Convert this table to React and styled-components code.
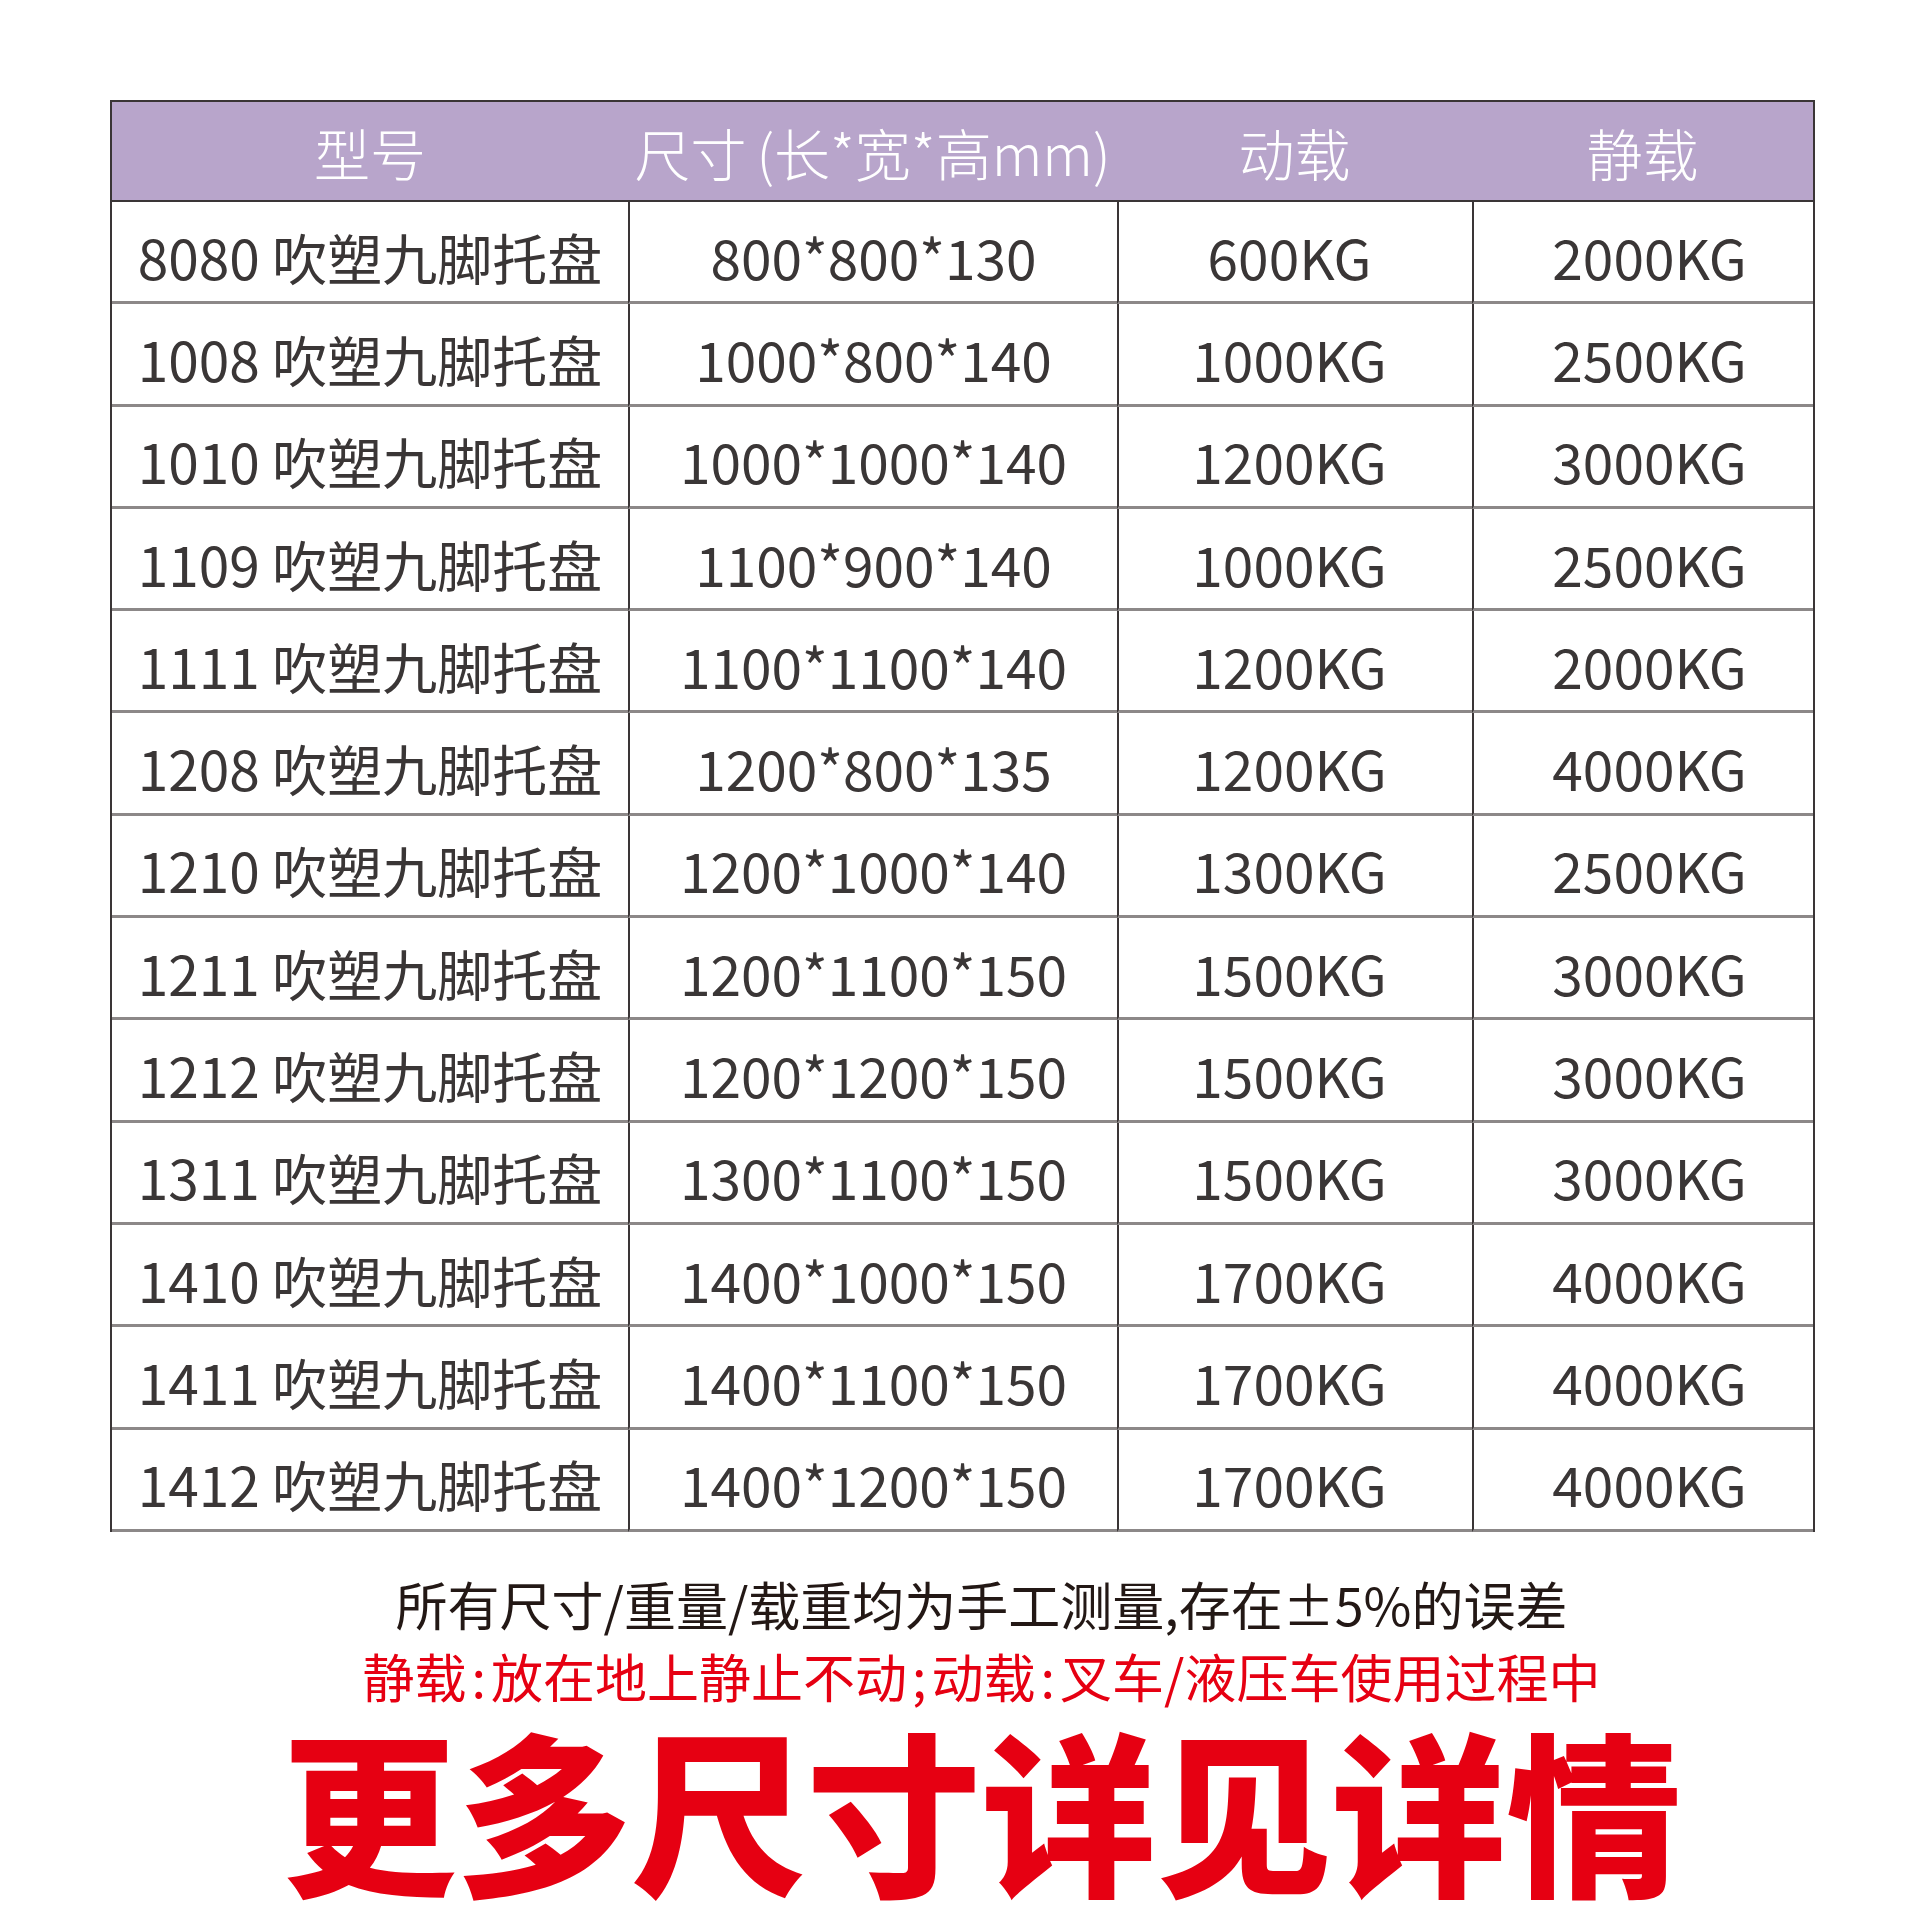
import React from 'react';
import styled, { createGlobalStyle } from 'styled-components';

const GlobalStyle = createGlobalStyle`
  html, body {
    margin: 0;
    padding: 0;
    background: #ffffff;
  }
  body {
    font-family: "Noto Sans CJK SC", "Noto Sans", sans-serif;
  }
`;

const Page = styled.main`
  width: 1919px;
  height: 1919px;
  padding-top: 100px;
  box-sizing: border-box;
  display: flex;
  flex-direction: column;
  overflow: hidden;
`;

const Table = styled.section`
  margin-left: 110px;
  width: 1705px;
  display: grid;
  grid-template-columns: 516px 489px 355px 341px;
  border-left: 2px solid #3a3536;
  border-right: 2px solid #3a3536;
  box-sizing: border-box;
`;

const HeadCell = styled.div`
  height: 102px;
  box-sizing: border-box;
  background: #b8a5cb;
  border-top: 2px solid #3a3536;
  border-bottom: 2px solid #3a3536;
  display: flex;
  align-items: center;
  justify-content: center;
  color: #ffffff;
  font-size: 56px;
  font-weight: 300;
  padding-top: 1px;
  white-space: nowrap;
`;

const Paren = styled.span`
  margin-left: 10px;
`;

const Cell = styled.div`
  height: 102.3px;
  box-sizing: border-box;
  border-bottom: 3px solid #8c8888;
  border-left: ${p => (p.$first ? 'none' : '2px solid #3a3536')};
  display: flex;
  align-items: center;
  justify-content: center;
  color: #3a3636;
  font-size: 55px;
  padding-top: 8px;
  padding-left: ${p => (p.$shift > 0 ? p.$shift : 0)}px;
  padding-right: ${p => (p.$shift < 0 ? -p.$shift : 0)}px;
  white-space: nowrap;
`;

const Notes = styled.footer`
  display: flex;
  flex-direction: column;
  align-items: center;
  padding-left: 44px;
  margin-top: 36px;
`;

const Note = styled.p`
  margin: 0;
  font-size: 52px;
  line-height: 1.38;
  color: ${p => p.$color};
  white-space: nowrap;
`;

const Punct = styled.span`
  padding: 0 5px;
`;

const Banner = styled.h2`
  margin: 0;
  font-size: 175px;
  font-weight: 900;
  line-height: 1.1;
  color: #e60012;
  white-space: nowrap;
`;

const rows = [
  ['8080', '800*800*130', '600KG', '2000KG'],
  ['1008', '1000*800*140', '1000KG', '2500KG'],
  ['1010', '1000*1000*140', '1200KG', '3000KG'],
  ['1109', '1100*900*140', '1000KG', '2500KG'],
  ['1111', '1100*1100*140', '1200KG', '2000KG'],
  ['1208', '1200*800*135', '1200KG', '4000KG'],
  ['1210', '1200*1000*140', '1300KG', '2500KG'],
  ['1211', '1200*1100*150', '1500KG', '3000KG'],
  ['1212', '1200*1200*150', '1500KG', '3000KG'],
  ['1311', '1300*1100*150', '1500KG', '3000KG'],
  ['1410', '1400*1000*150', '1700KG', '4000KG'],
  ['1411', '1400*1100*150', '1700KG', '4000KG'],
  ['1412', '1400*1200*150', '1700KG', '4000KG'],
];

export default function App() {
  return (
    <>
      <GlobalStyle />
      <Page>
        <Table>
          <HeadCell>型号</HeadCell>
          <HeadCell>尺寸<Paren>(</Paren>长*宽*高mm)</HeadCell>
          <HeadCell>动载</HeadCell>
          <HeadCell>静载</HeadCell>
          {rows.map(([model, size, dyn, stat]) => (
            <React.Fragment key={model}>
              <Cell $first>{model} 吹塑九脚托盘</Cell>
              <Cell>{size}</Cell>
              <Cell $shift={-12}>{dyn}</Cell>
              <Cell $shift={12}>{stat}</Cell>
            </React.Fragment>
          ))}
        </Table>

        <Notes>
          <Note $color="#231815">所有尺寸/重量/载重均为手工测量,存在±5%的误差</Note>
          <Note $color="#e60012">
            静载<Punct>:</Punct>放在地上静止不动<Punct>;</Punct>动载<Punct>:</Punct>叉车/液压车使用过程中
          </Note>
          <Banner>更多尺寸详见详情</Banner>
        </Notes>
      </Page>
    </>
  );
}
